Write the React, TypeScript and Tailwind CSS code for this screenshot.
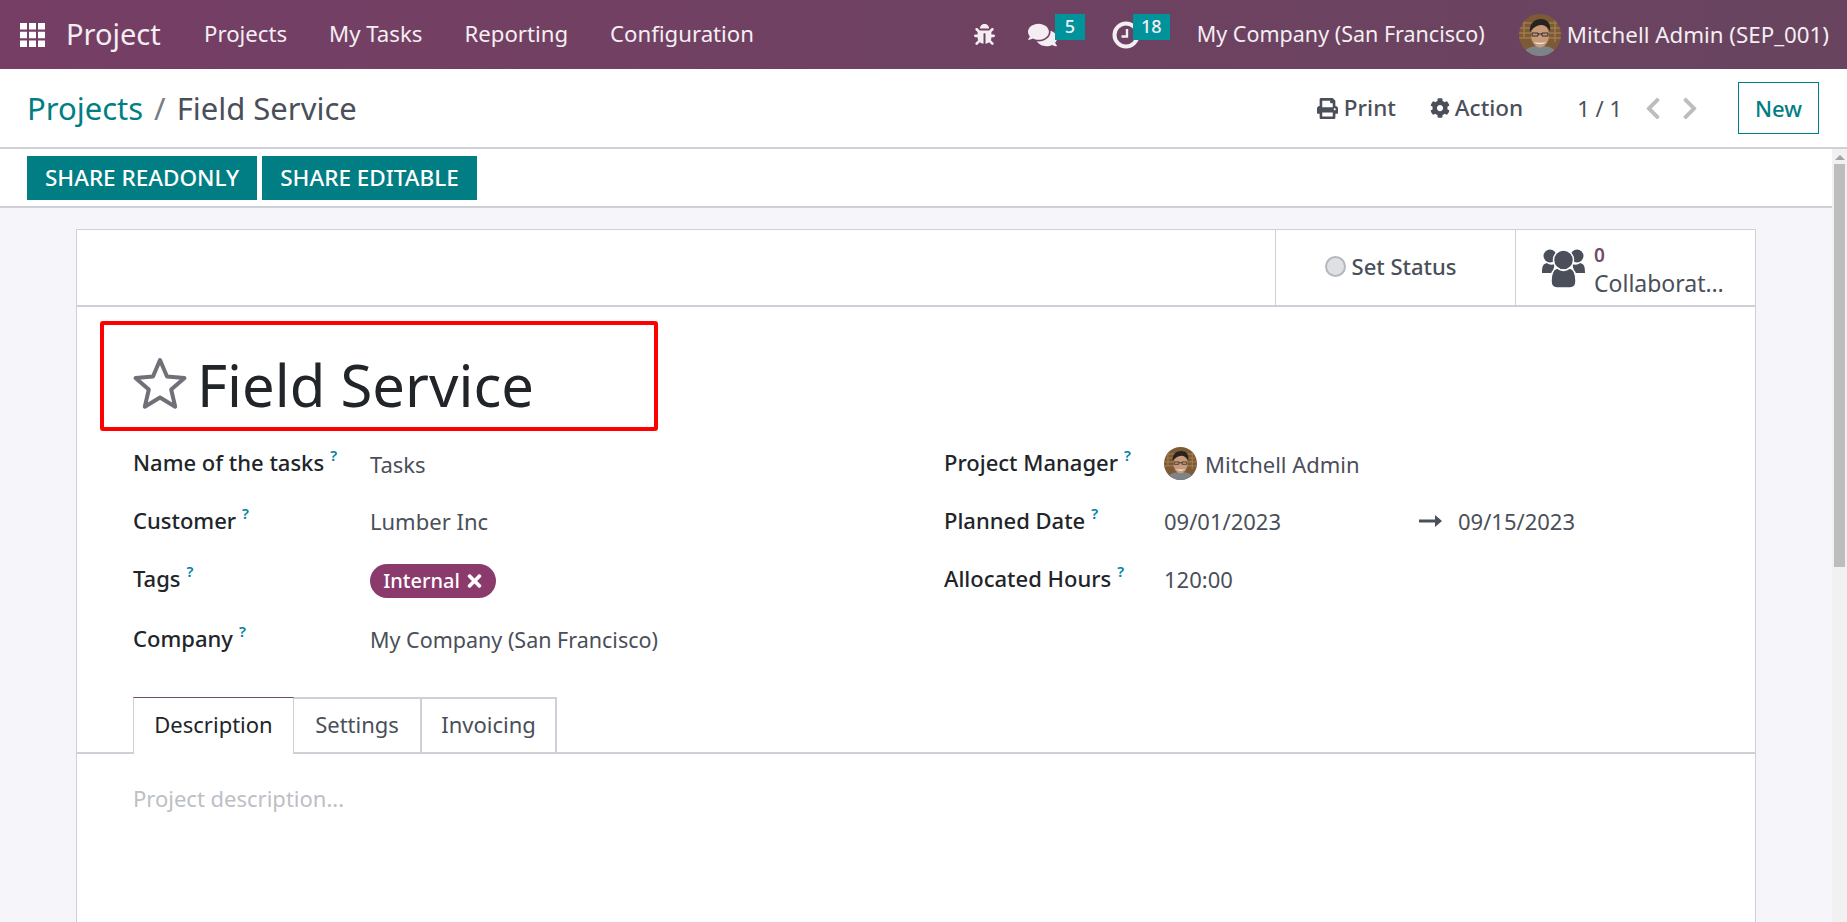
import { FaBug, FaChevronLeft, FaChevronRight, FaCog, FaComments, FaPrint, FaTimes } from 'react-icons/fa'

const font = { fontFamily: '"Noto Sans", "Open Sans", sans-serif' }

function Avatar({ size }: { size: number }) {
  return (
    <svg width={size} height={size} viewBox="0 0 42 42" className="shrink-0 rounded-full">
      <rect width="42" height="42" fill="#7d5a36" />
      <path d="M0 9h42M0 14h42M0 19h42M0 24h42M5 4v20M36 4v24" stroke="#a07a4c" strokeWidth="1.5" />
      <path d="M4 42c1-8 8-10 17-10s16 2 17 10z" fill="#7d8488" />
      <ellipse cx="21" cy="21" rx="9" ry="12.5" fill="#c99a79" />
      <path d="M11 18c-1-9 5-13 11-13s10 4 9 12c-3-4-5-6-9-6s-8 3-11 7z" fill="#2a221f" />
      <path d="M13 19h6v3h-6zM23 19h6v3h-6zM19 20h4" fill="none" stroke="#2e2a2a" strokeWidth="1" />
      <path d="M15 28c3 3 9 3 12 0-2 1-9 1-12 0z" fill="#f2e8e0" />
    </svg>
  )
}

function Help() {
  return <sup className="top-[-10px] ml-[6px] text-[15px] font-semibold text-[#0180a5]">?</sup>
}

function Label({ text }: { text: string }) {
  return (
    <div className="mb-[3px] text-[22px] font-medium leading-none text-[#212529]">
      {text}
      <Help />
    </div>
  )
}

export default function App() {
  return (
    <div style={font} className="flex h-screen flex-col overflow-hidden bg-white text-[22px] text-[#4a4f59]">
      <header className="flex h-[69px] shrink-0 items-center justify-between bg-linear-to-r from-[#763e65] to-[#68445f] pl-[20px] pr-[18px] text-white">
        <div className="flex items-center">
          <svg width="25" height="24" viewBox="0 0 25 24" fill="#fff">
            <rect width="7" height="6.5" />
            <rect x="9" width="7" height="6.5" />
            <rect x="18" width="7" height="6.5" />
            <rect y="8.75" width="7" height="6.5" />
            <rect x="9" y="8.75" width="7" height="6.5" />
            <rect x="18" y="8.75" width="7" height="6.5" />
            <rect y="17.5" width="7" height="6.5" />
            <rect x="9" y="17.5" width="7" height="6.5" />
            <rect x="18" y="17.5" width="7" height="6.5" />
          </svg>
          <span className="mb-[2px] ml-[21px] w-[138px] text-[29px] text-[#f4eef2]">Project</span>
          <nav className="mb-[2px] flex gap-[42px] text-[22.2px] text-[#f4eef2]">
            <span>Projects</span>
            <span>My Tasks</span>
            <span>Reporting</span>
            <span>Configuration</span>
          </nav>
        </div>
        <div className="flex items-center text-[#f4eef2]">
          <FaBug className="mr-[33px] h-[21px] w-[21px]" />
          <div className="relative mr-[55px] flex h-[40px] items-center">
            <FaComments className="h-[26px] w-[29px]" />
            <span className="absolute left-[27px] top-[-1px] flex h-[26px] w-[30px] items-center justify-center bg-[#01939c] text-[18px] font-medium">5</span>
          </div>
          <div className="relative mr-[57px] flex h-[40px] items-center">
            <svg width="28" height="28" viewBox="0 0 28 28" fill="none" stroke="#f4eef2">
              <circle cx="14" cy="14" r="11.5" strokeWidth="4" />
              <path d="M15 8v7.5H9.5" strokeWidth="2.4" />
            </svg>
            <span className="absolute left-[21px] top-[-1px] flex h-[26px] w-[37px] items-center justify-center bg-[#01939c] text-[18px] font-medium">18</span>
          </div>
          <span className="mr-[34px] text-[21.5px]">My Company (San Francisco)</span>
          <Avatar size={42} />
          <span className="ml-[6px] text-[22.3px]">Mitchell Admin (SEP_001)</span>
        </div>
      </header>

      <div className="flex h-[80px] shrink-0 items-center justify-between border-b-2 border-[#ced0d7] pl-[27px] pr-[28px]">
        <div className="text-[31px]">
          <span className="text-[#017e84]">Projects</span>
          <span className="mx-[11px] text-[#777d85]">/</span>
          <span>Field Service</span>
        </div>
        <div className="flex items-center font-medium">
          <FaPrint className="mr-[6px] h-[21px] w-[21px]" />
          <span className="text-[22.5px]">Print</span>
          <FaCog className="ml-[34px] mr-[5px] h-[20px] w-[20px]" />
          <span className="text-[22.5px]">Action</span>
          <span className="ml-[54px] font-normal">1 / 1</span>
          <FaChevronLeft className="ml-[23px] h-[25px] w-[16px] text-[#bdbdbd]" />
          <FaChevronRight className="ml-[21px] h-[25px] w-[16px] text-[#bdbdbd]" />
          <button className="ml-[40px] h-[52px] w-[81px] border border-[#017e84] font-medium text-[#017e84]">New</button>
        </div>
      </div>

      <div className="flex min-h-0 flex-1">
        <main className="min-w-0 flex-1 bg-[#f5f5fa]">
          <div className="flex h-[59px] items-start gap-[5px] border-b-2 border-[#ced0d7] bg-white pl-[27px] pt-[7px]">
            <button className="flex h-[44px] w-[230px] items-center justify-center bg-[#017e84] text-[22.5px] font-medium text-white">SHARE READONLY</button>
            <button className="flex h-[44px] w-[215px] items-center justify-center bg-[#017e84] text-[22.5px] font-medium text-white">SHARE EDITABLE</button>
          </div>

          <div className="relative ml-[76px] mr-[76px] mt-[21px] h-[800px] border border-[#ced0d7] bg-white">
            <div className="flex h-[77px] justify-end border-b-2 border-[#ced0d7]">
              <div className="flex w-[240px] items-center justify-center border-l border-[#ced0d7] pb-[3px] pr-[10px]">
                <span className="mr-[6px] h-[21px] w-[21px] rounded-full border-2 border-[#b4b7bd] bg-[#dee0e4]" />
                <span className="font-medium">Set Status</span>
              </div>
              <div className="flex w-[240px] items-center border-l border-[#ced0d7] pl-[26px]">
                <svg width="43" height="40" viewBox="0 0 43 40" fill="#4a4f59" className="mr-[9px]">
                  <circle cx="8" cy="8" r="6.5" />
                  <circle cx="35" cy="8" r="6.5" />
                  <path d="M0 25c0-7 1-9 5-10 2 2 5 2 8 1-1 3-2 6-2 9H3c-2 0-3-0-3 0zM43 25c0-7-1-9-5-10-2 2-5 2-8 1 1 3 2 6 2 9h8c2 0 3 0 3 0z" />
                  <circle cx="21.5" cy="12" r="10" stroke="#fff" strokeWidth="1.5" />
                  <path d="M9 33c0-8 2-12 6-13 4 3 9 3 13 0 4 1 6 5 6 13 0 5-3 7-6 7H15c-3 0-6-2-6-7z" stroke="#fff" strokeWidth="1.5" />
                </svg>
                <div className="flex flex-col pt-[5px]">
                  <span className="text-[19px] font-semibold leading-[26px] text-[#714b67]">0</span>
                  <span className="text-[23px] leading-[31px]">Collaborat…</span>
                </div>
              </div>
            </div>

            <div className="pl-[56px]">
              <div className="mt-[36px] flex h-[82px] items-center">
                <svg width="56" height="54" viewBox="0 0 56 54" fill="none" stroke="#6f7078" strokeWidth="4" strokeLinejoin="round" className="-ml-[1px] mb-[3px] mr-[9px] shrink-0">
                  <path d="M28 4l7 16.5 17.5 1.5-13.3 11.5 4 17.2L28 41.5 12.800 50.700l4-17.200L3.500 22 21 20.500z" />
                </svg>
                <h1 className="text-[58px] font-normal text-[#212529]">Field Service</h1>
              </div>

              <div className="mt-[9px] grid h-[236px] grid-cols-[811px_1fr] grid-rows-[58px_58px_58px_62px]">
                <div className="flex items-center">
                  <div className="w-[237px]"><Label text="Name of the tasks" /></div>
                  <span className="mt-[2px]">Tasks</span>
                </div>
                <div className="flex items-center">
                  <div className="w-[220px]"><Label text="Project Manager" /></div>
                  <Avatar size={33} />
                  <span className="ml-[8px] mt-[2px]">Mitchell Admin</span>
                </div>
                <div className="flex items-center">
                  <div className="w-[237px]"><Label text="Customer" /></div>
                  <span>Lumber Inc</span>
                </div>
                <div className="flex items-center">
                  <div className="w-[220px]"><Label text="Planned Date" /></div>
                  <span className="w-[255px]">09/01/2023</span>
                  <svg width="23" height="12" viewBox="0 0 23 12" fill="#4a4f59" className="mr-[16px]">
                    <path d="M0 4.500h16V0l7 6-7 6V7.500H0z" />
                  </svg>
                  <span>09/15/2023</span>
                </div>
                <div className="flex items-center">
                  <div className="w-[237px]"><Label text="Tags" /></div>
                  <span className="mt-[4px] flex h-[34px] w-[126px] items-center justify-center gap-[6px] rounded-full bg-[#8a3a6b] text-[20px] font-medium text-white">
                    Internal
                    <FaTimes className="h-[20px] w-[17px]" />
                  </span>
                </div>
                <div className="flex items-center">
                  <div className="w-[220px]"><Label text="Allocated Hours" /></div>
                  <span>120:00</span>
                </div>
                <div className="flex items-center">
                  <div className="w-[237px]"><Label text="Company" /></div>
                  <span className="mt-[2px] text-[21.5px]">My Company (San Francisco)</span>
                </div>
              </div>
            </div>

            <div className="mt-[27px] border-b-2 border-[#ced0d7] pl-[56px]">
              <div className="-mb-[2px] flex h-[57px]">
                <div className="flex w-[161px] items-center justify-center border border-b-0 border-[#ced0d7] border-t-[#714b67] bg-white pb-[3px] text-[#212529]">Description</div>
                <div className="flex w-[128px] items-center justify-center border-2 border-l-0 border-[#ced0d7] pb-[3px]">Settings</div>
                <div className="flex w-[135px] items-center justify-center border-2 border-l-0 border-[#ced0d7] pb-[3px]">Invoicing</div>
              </div>
            </div>
            <p className="ml-[56px] mt-[28px] text-[#bcbfc5]">Project description...</p>

            {/* red annotation box drawn on top of the screenshot */}
            <div className="absolute left-[23px] top-[91px] h-[110px] w-[558px] rounded-[3px] border-4 border-[#fe0000]" />
          </div>
        </main>

        <div className="flex w-[15px] shrink-0 flex-col bg-[#f1f1f1] px-[2px]">
          <div className="mx-auto mt-[6px] h-0 w-0 border-x-[5px] border-b-[5px] border-x-transparent border-b-[#a3a3a3]" />
          <div className="mt-[4px] h-[403px] w-[11px] bg-[#bdbdbd]" />
        </div>
      </div>
    </div>
  )
}
